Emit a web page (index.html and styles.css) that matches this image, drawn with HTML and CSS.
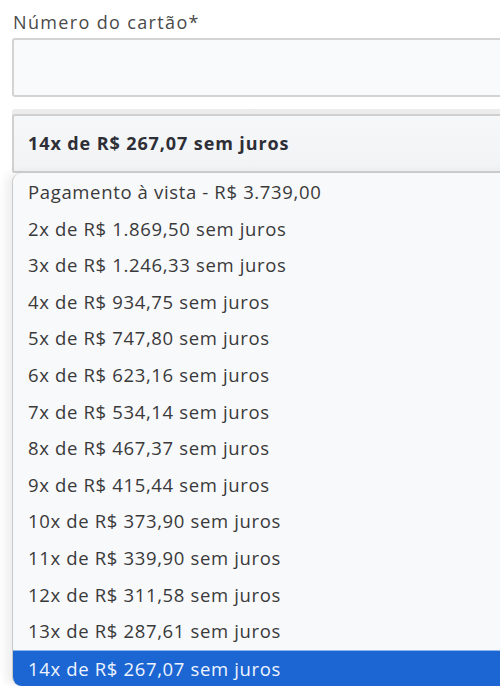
FILE: index.html
```html
<!DOCTYPE html>
<html lang="pt-BR">
<head>
<meta charset="utf-8">
<title>Pagamento</title>
<link rel="stylesheet" href="styles.css">
</head>
<body>
<div class="form">
  <label class="label">Número do cartão*</label>
  <div class="input"></div>
  <div class="select-wrap">
    <div class="select">14x de R$ 267,07 sem juros</div>
  </div>
  <ul class="list">
    <li>Pagamento à vista - R$ 3.739,00</li>
    <li>2x de R$ 1.869,50 sem juros</li>
    <li>3x de R$ 1.246,33 sem juros</li>
    <li>4x de R$ 934,75 sem juros</li>
    <li>5x de R$ 747,80 sem juros</li>
    <li>6x de R$ 623,16 sem juros</li>
    <li>7x de R$ 534,14 sem juros</li>
    <li>8x de R$ 467,37 sem juros</li>
    <li>9x de R$ 415,44 sem juros</li>
    <li>10x de R$ 373,90 sem juros</li>
    <li>11x de R$ 339,90 sem juros</li>
    <li>12x de R$ 311,58 sem juros</li>
    <li>13x de R$ 287,61 sem juros</li>
    <li class="active">14x de R$ 267,07 sem juros</li>
  </ul>
</div>
</body>
</html>
```

FILE: styles.css
```css
html, body {
  margin: 0;
  padding: 0;
  background: #ffffff;
  overflow: hidden;
  width: 500px;
  height: 686px;
}
body {
  font-family: "Open Sans", "Noto Sans", sans-serif;
  color: #3c3c3c;
}
.form {
  padding: 10px 0 0 12px;
  width: 520px;
}
.label {
  display: block;
  font-size: 18px;
  line-height: 25px;
  color: #4a4a4a;
  padding-left: 1px;
  letter-spacing: 1.35px;
}
.input {
  margin-top: 3px;
  height: 55px;
  border: 2px solid #d3d3d3;
  border-radius: 3px;
  background: #f9fafb;
}
.select-wrap {
  margin-top: 12px;
  padding-top: 5px;
  background: linear-gradient(#ececec, #f2f2f2);
  border-radius: 3px 3px 0 0;
}
.select {
  height: 55px;
  border: 2px solid #d0d0d0;
  border-radius: 3px;
  background: linear-gradient(#f6f7f9, #f2f3f5);
  font-weight: 700;
  font-size: 18px;
  line-height: 55px;
  padding-left: 14px;
  color: #2e2e36;
  letter-spacing: 0.9px;
}
.list {
  list-style: none;
  margin: 0;
  padding: 1px 0 0 0;
  background: #f8f9fb;
  border-left: 1px solid #c9c9c9;
  border-radius: 9px 0 0 9px;
  box-shadow: -6px 0 10px rgba(0, 0, 0, 0.07);
  overflow: hidden;
}
.list li {
  height: 36.6px;
  line-height: 36.6px;
  font-size: 18.5px;
  padding-left: 15px;
  color: #3a3a3a;
  white-space: nowrap;
  letter-spacing: 0.65px;
}
.list li.active {
  background: #1b66d2;
  color: #eef4ff;
  border-top: 1px solid #8fb6ee;
  box-sizing: border-box;
}
```
